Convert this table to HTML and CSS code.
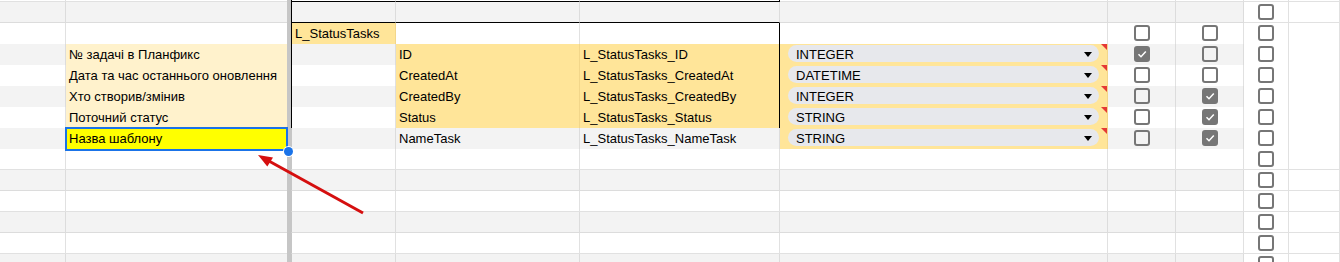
FILE: index.html
```html
<!DOCTYPE html>
<html lang="uk">
<head>
<meta charset="utf-8">
<title>Sheet</title>
<link rel="stylesheet" href="styles.css">
</head>
<body>
<div class="sheet">
  <div class="row top">
    <div class="c"></div><div class="c c1"></div><div class="fz"></div><div class="c c2 bl bb"></div><div class="c bb"></div><div class="c bb br"></div><div class="c"></div><div class="c"></div><div class="c"></div><div class="c c8"></div><div class="c c9"></div>
  </div>
  <div class="row band">
    <div class="c"></div><div class="c c1"></div><div class="fz"></div><div class="c c2 bl bb"></div><div class="c bb"></div><div class="c bb"></div><div class="c"></div><div class="c"></div><div class="c"></div><div class="c ck c8"><span class="cb"></span></div><div class="c c9"></div>
  </div>
  <div class="row">
    <div class="c"></div><div class="c c1"></div><div class="fz"></div><div class="c c2 bl y2">L_StatusTasks</div><div class="c"></div><div class="c br"></div><div class="c"></div><div class="c ck"><span class="cb"></span></div><div class="c ck"><span class="cb"></span></div><div class="c ck c8"><span class="cb"></span></div><div class="c c9"></div>
  </div>
  <div class="row band">
    <div class="c"></div><div class="c c1 y1">№ задачі в Планфикс</div><div class="fz"></div><div class="c c2 bl"></div><div class="c y2">ID</div><div class="c y2 br">L_StatusTasks_ID</div><div class="c y2 note"><div class="chip"><span>INTEGER</span><i class="caret"></i></div></div><div class="c ck"><span class="cb on"><svg viewBox="0 0 12 12"><polyline points="2.5,6.2 5,8.7 9.8,3.6"/></svg></span></div><div class="c ck"><span class="cb"></span></div><div class="c ck c8"><span class="cb"></span></div><div class="c c9"></div>
  </div>
  <div class="row">
    <div class="c"></div><div class="c c1 y1">Дата та час останнього оновлення</div><div class="fz"></div><div class="c c2 bl"></div><div class="c y2">CreatedAt</div><div class="c y2 br">L_StatusTasks_CreatedAt</div><div class="c y2 note"><div class="chip"><span>DATETIME</span><i class="caret"></i></div></div><div class="c ck"><span class="cb"></span></div><div class="c ck"><span class="cb"></span></div><div class="c ck c8"><span class="cb"></span></div><div class="c c9"></div>
  </div>
  <div class="row band">
    <div class="c"></div><div class="c c1 y1">Хто створив/змінив</div><div class="fz"></div><div class="c c2 bl"></div><div class="c y2">CreatedBy</div><div class="c y2 br">L_StatusTasks_CreatedBy</div><div class="c y2 note"><div class="chip"><span>INTEGER</span><i class="caret"></i></div></div><div class="c ck"><span class="cb"></span></div><div class="c ck"><span class="cb on"><svg viewBox="0 0 12 12"><polyline points="2.5,6.2 5,8.7 9.8,3.6"/></svg></span></div><div class="c ck c8"><span class="cb"></span></div><div class="c c9"></div>
  </div>
  <div class="row">
    <div class="c"></div><div class="c c1 y1">Поточний статус</div><div class="fz"></div><div class="c c2 bl bb"></div><div class="c y2 bb">Status</div><div class="c y2 bb br">L_StatusTasks_Status</div><div class="c y2 note"><div class="chip"><span>STRING</span><i class="caret"></i></div></div><div class="c ck"><span class="cb"></span></div><div class="c ck"><span class="cb on"><svg viewBox="0 0 12 12"><polyline points="2.5,6.2 5,8.7 9.8,3.6"/></svg></span></div><div class="c ck c8"><span class="cb"></span></div><div class="c c9"></div>
  </div>
  <div class="row band">
    <div class="c"></div><div class="c c1 y3 sel">Назва шаблону<span class="handle"></span></div><div class="fz"></div><div class="c c2"></div><div class="c">NameTask</div><div class="c">L_StatusTasks_NameTask</div><div class="c y2 note"><div class="chip"><span>STRING</span><i class="caret"></i></div></div><div class="c ck"><span class="cb"></span></div><div class="c ck"><span class="cb on"><svg viewBox="0 0 12 12"><polyline points="2.5,6.2 5,8.7 9.8,3.6"/></svg></span></div><div class="c ck c8"><span class="cb"></span></div><div class="c c9"></div>
  </div>
  <div class="row">
    <div class="c"></div><div class="c c1"></div><div class="fz"></div><div class="c c2"></div><div class="c"></div><div class="c"></div><div class="c"></div><div class="c"></div><div class="c"></div><div class="c ck c8"><span class="cb"></span></div><div class="c c9"></div>
  </div>
  <div class="row band">
    <div class="c"></div><div class="c c1"></div><div class="fz"></div><div class="c c2"></div><div class="c"></div><div class="c"></div><div class="c"></div><div class="c"></div><div class="c"></div><div class="c ck c8"><span class="cb"></span></div><div class="c c9"></div>
  </div>
  <div class="row">
    <div class="c"></div><div class="c c1"></div><div class="fz"></div><div class="c c2"></div><div class="c"></div><div class="c"></div><div class="c"></div><div class="c"></div><div class="c"></div><div class="c ck c8"><span class="cb"></span></div><div class="c c9"></div>
  </div>
  <div class="row band">
    <div class="c"></div><div class="c c1"></div><div class="fz"></div><div class="c c2"></div><div class="c"></div><div class="c"></div><div class="c"></div><div class="c"></div><div class="c"></div><div class="c ck c8"><span class="cb"></span></div><div class="c c9"></div>
  </div>
  <div class="row">
    <div class="c"></div><div class="c c1"></div><div class="fz"></div><div class="c c2"></div><div class="c"></div><div class="c"></div><div class="c"></div><div class="c"></div><div class="c"></div><div class="c ck c8"><span class="cb"></span></div><div class="c c9"></div>
  </div>
  <div class="row band">
    <div class="c"></div><div class="c c1"></div><div class="fz"></div><div class="c c2"></div><div class="c"></div><div class="c"></div><div class="c"></div><div class="c"></div><div class="c"></div><div class="c ck c8"><span class="cb"></span></div><div class="c c9"></div>
  </div>
  <svg class="arrow" width="1340" height="262" viewBox="0 0 1340 262">
    <line x1="363" y1="213" x2="268" y2="160.5"/>
    <polygon points="258,155 273,157.4 267.3,166.6"/>
  </svg>
</div>
</body>
</html>
```

FILE: styles.css
```css
* {
  box-sizing: border-box;
  margin: 0;
  padding: 0;
}

html, body {
  background: #ffffff;
}

body {
  margin: 0;
  width: 1340px;
  height: 262px;
  overflow: hidden;
  font-family: "Liberation Sans", Arial, sans-serif;
  font-size: 13px;
  color: #000000;
}

.sheet {
  position: relative;
  width: 1340px;
}

.row {
  display: grid;
  grid-template-columns: 66px 221px 4px 105px 184px 200px 328px 68px 68px 45px 1fr;
  height: 21px;
}

.row.top {
  height: 2px;
}

.c {
  position: relative;
  border-right: 1px solid #e1e1e1;
  border-bottom: 1px solid #e1e1e1;
  line-height: 22px;
  padding: 0 3px;
  white-space: nowrap;
  background: #ffffff;
}

.row.top .c {
  line-height: 0;
}

.band > .c {
  background: #f3f3f3;
  border-color: #dcdcdc;
}

.band > .c8,
.band > .c9 {
  background: #ffffff;
  border-color: #e1e1e1;
}

.c.c1 {
  border-right: none;
}

.c.c2 {
  border-left: 1px solid #c6c6c6;
}

.fz {
  background: #c6c6c6;
}

.c.bl {
  border-left-color: #000000;
}

.c.bb {
  border-bottom-color: #000000;
}

.c.br {
  border-right-color: #000000;
}

.c.y1 {
  background: #fff2cc;
  border-bottom-color: #efe0b4;
}

.c.y2 {
  background: #ffe599;
  border-bottom-color: #f2d68a;
  border-right-color: #f2d68a;
}

.c.y2.br {
  border-right-color: #000000;
}

.c.y2.bb {
  border-bottom-color: #000000;
}

.c.y3 {
  background: #ffff00;
}

.sel::after {
  content: "";
  position: absolute;
  left: -1px;
  top: -1px;
  right: -1px;
  bottom: -1px;
  border: 2px solid #1a73e8;
  z-index: 2;
}

.handle {
  position: absolute;
  right: -5.5px;
  bottom: -5.5px;
  width: 9px;
  height: 9px;
  border-radius: 50%;
  background: #1a73e8;
  box-shadow: 0 0 0 1px #ffffff;
  z-index: 3;
}

.note::after {
  content: "";
  position: absolute;
  top: 0;
  right: 0;
  border-top: 6px solid #e53935;
  border-left: 6px solid transparent;
}

.chip {
  display: flex;
  align-items: center;
  justify-content: space-between;
  height: 17px;
  margin: 1px 5px 0 5px;
  padding: 0 7px 0 8px;
  border-radius: 9px;
  background: #e7e8ec;
  line-height: 17px;
}

.chip span {
  line-height: 19px;
  height: 17px;
}

.caret {
  display: block;
  width: 0;
  height: 0;
  margin-top: 1px;
  border-left: 4.5px solid transparent;
  border-right: 4.5px solid transparent;
  border-top: 5px solid #000000;
}

.ck {
  padding: 0;
}

.cb {
  display: block;
  width: 16px;
  height: 16px;
  margin: 2px auto 0;
  border: 2px solid #767676;
  border-radius: 3px;
}

.cb.on {
  background: #767676;
}

.cb svg {
  display: block;
  width: 12px;
  height: 12px;
}

.cb svg polyline {
  fill: none;
  stroke: #ffffff;
  stroke-width: 1.5;
}

.arrow {
  position: absolute;
  left: 0;
  top: 0;
  pointer-events: none;
  z-index: 4;
}

.arrow line {
  stroke: #d50f0f;
  stroke-width: 3;
}

.arrow polygon {
  fill: #d50f0f;
}
```
